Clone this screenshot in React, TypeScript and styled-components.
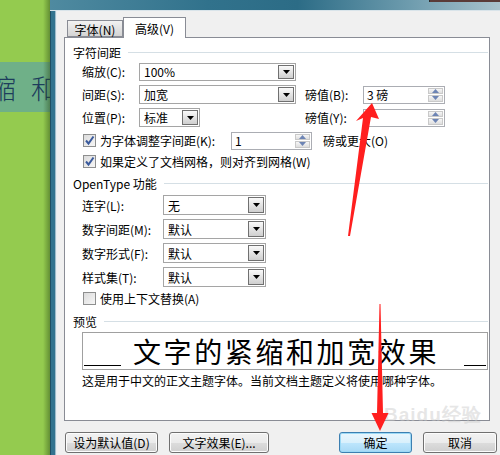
import React from 'react';
import styled, { createGlobalStyle } from 'styled-components';

const uiFont = `"Noto Sans CJK SC", "Liberation Sans", sans-serif`;

const GlobalStyle = createGlobalStyle`
  html,
  body {
    margin: 0;
    padding: 0;
  }

  body {
    width: 500px;
    height: 455px;
    overflow: hidden;
    font-family: ${uiFont};
    font-size: 12px;
    color: #000;
  }
`;

const Page = styled.div`
  position: relative;
  display: flex;
  width: 500px;
  height: 455px;
  overflow: hidden;
`;

const Desktop = styled.div`
  position: relative;
  flex: 0 0 50px;
  background: #94cb4f;
  overflow: hidden;

  &::after {
    content: '';
    position: absolute;
    top: 0;
    right: 0;
    bottom: 0;
    width: 7px;
    background: linear-gradient(to right, rgba(40, 70, 20, 0), rgba(40, 70, 20, 0.45));
  }
`;

const Band = styled.div`
  display: flex;
  align-items: center;
  height: 50px;
  margin-top: 62px;
  background: #6fb088;
  overflow: hidden;
`;

const BandText = styled.span`
  margin-left: -11px;
  white-space: nowrap;
  font-size: 27px;
  font-weight: 300;
  word-spacing: 9px;
  color: #1d3d5c;
`;

const Window = styled.div`
  display: flex;
  flex-direction: column;
  flex: 1;
  min-width: 0;
`;

const TitleBar = styled.div`
  position: relative;
  flex: 0 0 10px;
  background: linear-gradient(to right, #4f8aa0 0%, #31728c 35%, #2c6c86 55%, #6e9cae 80%, #a9c3cd 100%);
  border-bottom: 1px solid #d9e4ea;
`;

const CloseEdge = styled.div`
  position: absolute;
  top: 0;
  right: 0;
  width: 70px;
  height: 2px;
  background: #5a3b38;
  border-left: 1px solid #2b2b2b;
`;

const WindowBody = styled.div`
  display: flex;
  flex: 1;
  min-height: 0;
`;

const FrameEdge = styled.div`
  flex: 0 0 7px;
  background: linear-gradient(to right, #1f4f63 0 1px, #32738f 1px 5px, #9fbccb 5px 6px, #e6eef2 6px);
`;

const Client = styled.div`
  display: flex;
  flex-direction: column;
  flex: 1;
  padding: 6px 0 0 7px;
  background: #f0f0f0;
`;

const TabStrip = styled.div`
  display: flex;
  align-items: flex-end;
  height: 20px;
  padding-left: 3px;
`;

const Tab = styled.div<{ $active?: boolean; $w: number }>`
  position: relative;
  z-index: ${(p) => (p.$active ? 1 : 0)};
  box-sizing: border-box;
  display: flex;
  align-items: center;
  justify-content: center;
  width: ${(p) => p.$w}px;
  height: ${(p) => (p.$active ? 21 : 17)}px;
  margin-bottom: ${(p) => (p.$active ? -1 : 0)}px;
  border: 1px solid #898c95;
  border-bottom: ${(p) => (p.$active ? 'none' : '1px solid #898c95')};
  background: ${(p) => (p.$active ? '#fff' : 'linear-gradient(#f2f2f2, #e3e3e3 50%, #d4d4d4)')};
  padding-top: ${(p) => (p.$active ? 0 : 1)}px;
  font-size: 12px;
`;

const Panel = styled.div`
  box-sizing: border-box;
  display: flex;
  flex-direction: column;
  width: 426px;
  height: 384px;
  padding: 6px 1px 0 8px;
  border: 1px solid #898c95;
  background: #fff;
`;

const GroupHeader = styled.div<{ $mt?: number }>`
  display: flex;
  align-items: center;
  gap: 7px;
  height: 16px;
  margin-top: ${(p) => p.$mt ?? 0}px;
  white-space: nowrap;

  &::after {
    content: '';
    flex: 1;
    height: 1px;
    background: #d5dfe5;
  }
`;

const SpacingGrid = styled.div`
  display: grid;
  grid-template-columns: 57px 166px 58px 82px;
  grid-auto-rows: 19px;
  row-gap: 4px;
  align-items: center;
  margin: 2px 0 0 9px;
`;

const FeatureGrid = styled.div`
  display: grid;
  grid-template-columns: 81px 103px;
  grid-auto-rows: 20px;
  row-gap: 4px;
  align-items: center;
  margin: 4px 0 0 9px;
`;

const Label = styled.span`
  white-space: nowrap;
`;

const Combo = styled.div<{ $w: number; $h?: number }>`
  box-sizing: border-box;
  display: flex;
  align-items: center;
  width: ${(p) => p.$w}px;
  height: ${(p) => p.$h ?? 19}px;
  padding: 1px;
  border: 1px solid #a5a5a5;
  background: #fff;
`;

const ComboText = styled.span`
  flex: 1;
  padding-left: 3px;
  white-space: nowrap;
`;

const DropButton = styled.div`
  box-sizing: border-box;
  display: flex;
  align-items: center;
  justify-content: center;
  align-self: stretch;
  width: 16px;
  border: 1px solid #707070;
  background: linear-gradient(#fafafa, #e4e4e4 50%, #cfcfcf);
`;

const Spin = styled.div<{ $w: number }>`
  box-sizing: border-box;
  display: flex;
  align-items: stretch;
  width: ${(p) => p.$w}px;
  height: 18px;
  border: 1px solid #abadb3;
  background: #fff;
`;

const SpinText = styled.span`
  flex: 1;
  align-self: center;
  padding-left: 3px;
  white-space: nowrap;
`;

const SpinButtons = styled.div`
  display: flex;
  flex-direction: column;
  width: 15px;
  margin: 1px;
  gap: 1px;
`;

const SpinHalf = styled.div`
  flex: 1;
  display: flex;
  align-items: center;
  justify-content: center;
  background: linear-gradient(#f6f6f6, #dedede);
  border: 1px solid #c9c9c9;
`;

const CheckRow = styled.div<{ $h: number; $mt?: number }>`
  display: flex;
  align-items: center;
  height: ${(p) => p.$h}px;
  margin: ${(p) => p.$mt ?? 0}px 0 0 10px;
  white-space: nowrap;
`;

const CheckLabel = styled.span<{ $w?: number }>`
  display: flex;
  align-items: center;
  gap: 4px;
  width: ${(p) => (p.$w ? `${p.$w}px` : 'auto')};
`;

const Box = styled.span`
  box-sizing: border-box;
  display: inline-flex;
  align-items: center;
  justify-content: center;
  width: 13px;
  height: 13px;
  border: 1px solid #8e8f8f;
  background: linear-gradient(135deg, #dcdcdc, #f6f6f6);
`;

const Trailing = styled.span`
  margin-left: 11px;
`;

const PreviewBox = styled.div`
  box-sizing: border-box;
  display: flex;
  align-items: center;
  width: 406px;
  height: 38px;
  margin: 3px 0 0 9px;
  padding: 0 1px;
  border: 1px solid #a0a0a0;
  overflow: hidden;
`;

const Rule = styled.span<{ $w: number }>`
  flex: 0 0 ${(p) => p.$w}px;
  align-self: flex-end;
  height: 1px;
  margin-bottom: 3px;
  background: #000;
`;

const PreviewText = styled.span`
  margin: 0 auto 0 12px;
  font-size: 28px;
  line-height: 32px;
  letter-spacing: 2.6px;
  white-space: nowrap;
`;

const Description = styled.div`
  height: 16px;
  margin: 3px 0 0 9px;
  line-height: 16px;
  white-space: nowrap;
`;

const ButtonBar = styled.div`
  display: flex;
  align-items: center;
  margin: 11px 0 0 1px;
`;

const Button = styled.div<{ $w: number; $ml?: number; $default?: boolean }>`
  box-sizing: border-box;
  display: flex;
  align-items: center;
  justify-content: center;
  width: ${(p) => p.$w}px;
  height: 21px;
  margin-left: ${(p) => p.$ml ?? 0}px;
  border: 1px solid ${(p) => (p.$default ? '#3c7fb1' : '#707070')};
  border-radius: 3px;
  background: ${(p) =>
    p.$default
      ? 'linear-gradient(#eaf6fd, #d9f0fc 50%, #bee6fd 50%, #a7d9f5)'
      : 'linear-gradient(#f2f2f2, #ebebeb 50%, #dddddd 50%, #cfcfcf)'};
  box-shadow: inset 0 0 0 1px ${(p) => (p.$default ? '#9cd9f6' : '#fcfcfc')};
  white-space: nowrap;
`;

const Overlay = styled.svg`
  position: absolute;
  inset: 0;
  pointer-events: none;
`;

const Watermark = styled.div`
  position: absolute;
  left: 384px;
  top: 402px;
  white-space: nowrap;
  font-family: "Liberation Sans", sans-serif;
  font-size: 19px;
  font-weight: 700;
  letter-spacing: 1px;
  color: rgba(200, 200, 200, 0.45);
  pointer-events: none;
`;

const Caret = () => (
  <svg width="7" height="4" viewBox="0 0 7 4">
    <polygon points="0,0 7,0 3.5,4" fill="#000" />
  </svg>
);

const Tick = () => (
  <svg width="11" height="11" viewBox="0 0 11 11">
    <path d="M2 5.5 L4.5 8.5 L9.5 1.5" fill="none" stroke="#3a5a9c" strokeWidth="2" />
  </svg>
);

const ComboBox = ({ w, h, value }: { w: number; h?: number; value: string }) => (
  <Combo $w={w} $h={h}>
    <ComboText>{value}</ComboText>
    <DropButton>
      <Caret />
    </DropButton>
  </Combo>
);

const SpinBox = ({ w, value }: { w: number; value?: string }) => (
  <Spin $w={w}>
    <SpinText>{value}</SpinText>
    <SpinButtons>
      <SpinHalf>
        <svg width="7" height="4" viewBox="0 0 7 4">
          <polygon points="3.5,0 7,4 0,4" fill="#6d84b4" />
        </svg>
      </SpinHalf>
      <SpinHalf>
        <svg width="7" height="4" viewBox="0 0 7 4">
          <polygon points="0,0 7,0 3.5,4" fill="#6d84b4" />
        </svg>
      </SpinHalf>
    </SpinButtons>
  </Spin>
);

const CheckBox = ({ checked }: { checked?: boolean }) => <Box>{checked && <Tick />}</Box>;

const features = [
  { label: '连字(L):', value: '无' },
  { label: '数字间距(M):', value: '默认' },
  { label: '数字形式(F):', value: '默认' },
  { label: '样式集(T):', value: '默认' },
];

const App = () => {
  return (
    <React.Fragment>
      <GlobalStyle />
      <Page>
        <Desktop>
          <Band>
            <BandText>缩 和</BandText>
          </Band>
        </Desktop>
        <Window>
          <TitleBar>
            <CloseEdge />
          </TitleBar>
          <WindowBody>
            <FrameEdge />
            <Client>
              <TabStrip>
                <Tab $w={56}>字体(N)</Tab>
                <Tab $w={63} $active>
                  高级(V)
                </Tab>
              </TabStrip>
              <Panel>
                <GroupHeader>字符间距</GroupHeader>
                <SpacingGrid>
                  <Label>缩放(C):</Label>
                  <ComboBox w={157} h={18} value="100%" />
                  <span />
                  <span />
                  <Label>间距(S):</Label>
                  <ComboBox w={157} value="加宽" />
                  <Label>磅值(B):</Label>
                  <SpinBox w={82} value="3 磅" />
                  <Label>位置(P):</Label>
                  <ComboBox w={61} value="标准" />
                  <Label>磅值(Y):</Label>
                  <SpinBox w={82} />
                </SpacingGrid>
                <CheckRow $h={19} $mt={4}>
                  <CheckLabel $w={148}>
                    <CheckBox checked />
                    为字体调整字间距(K):
                  </CheckLabel>
                  <SpinBox w={81} value="1" />
                  <Trailing>磅或更大(O)</Trailing>
                </CheckRow>
                <CheckRow $h={18} $mt={2}>
                  <CheckLabel>
                    <CheckBox checked />
                    如果定义了文档网格，则对齐到网格(W)
                  </CheckLabel>
                </CheckRow>
                <GroupHeader $mt={5}>OpenType 功能</GroupHeader>
                <FeatureGrid>
                  {features.map((f) => (
                    <React.Fragment key={f.label}>
                      <Label>{f.label}</Label>
                      <ComboBox w={103} h={20} value={f.value} />
                    </React.Fragment>
                  ))}
                </FeatureGrid>
                <CheckRow $h={16} $mt={3}>
                  <CheckLabel>
                    <CheckBox />
                    使用上下文替换(A)
                  </CheckLabel>
                </CheckRow>
                <GroupHeader $mt={7}>预览</GroupHeader>
                <PreviewBox>
                  <Rule $w={37} />
                  <PreviewText>文字的紧缩和加宽效果</PreviewText>
                  <Rule $w={22} />
                </PreviewBox>
                <Description>这是用于中文的正文主题字体。当前文档主题定义将使用哪种字体。</Description>
              </Panel>
              <ButtonBar>
                <Button $w={93}>设为默认值(D)</Button>
                <Button $w={100} $ml={11}>
                  文字效果(E)...
                </Button>
                <Button $w={73} $ml={70} $default>
                  确定
                </Button>
                <Button $w={74} $ml={11}>
                  取消
                </Button>
              </ButtonBar>
            </Client>
          </WindowBody>
        </Window>
        <Watermark>Baidu经验</Watermark>
        <Overlay width="500" height="455" viewBox="0 0 500 455">
          <polygon
            points="372,103 379,119 371,117 350,236 348,236 363,118 356,121"
            fill="#ff1f1f"
          />
          <polygon
            points="379.5,304 380.5,304 383,413 388.5,413 380,431 371.5,413 377,413"
            fill="#ff1f1f"
          />
        </Overlay>
      </Page>
    </React.Fragment>
  );
};

export default App;
